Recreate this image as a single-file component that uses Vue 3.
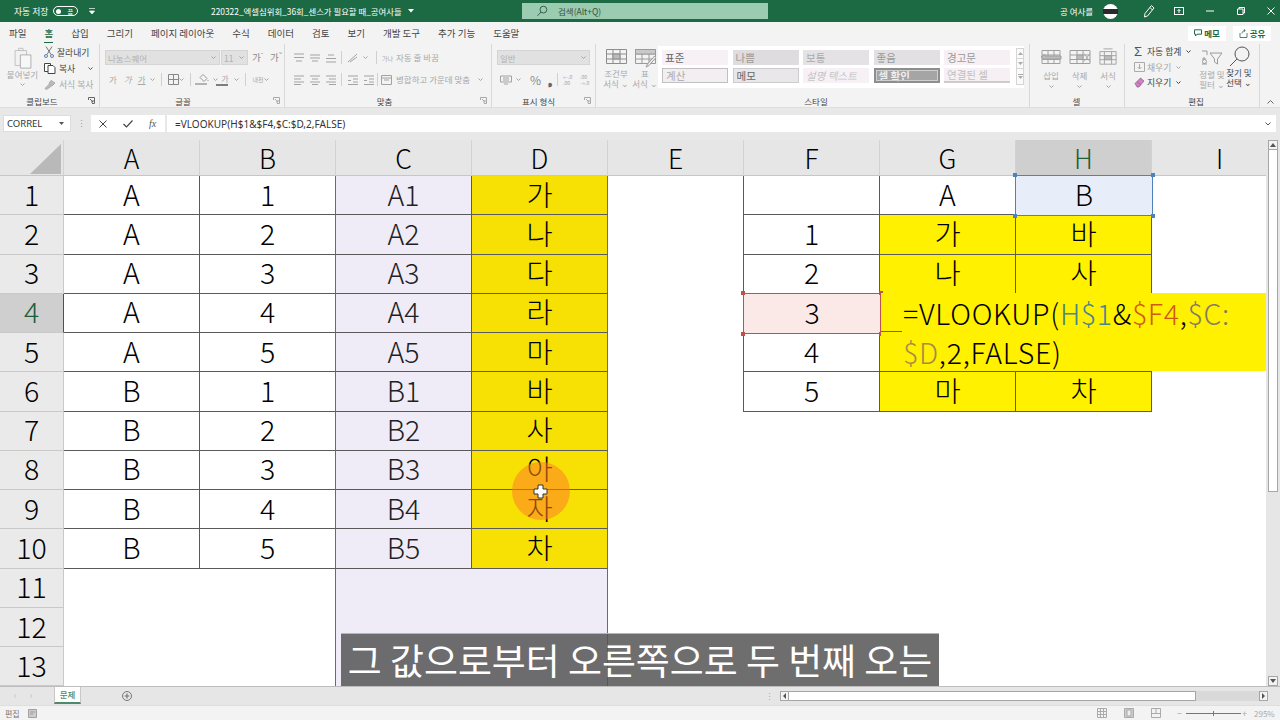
<script setup>
import { computed } from 'vue'

const tabs = ['파일', '홈', '삽입', '그리기', '페이지 레이아웃', '수식', '데이터', '검토', '보기', '개발 도구', '추가 기능', '도움말']
const columns = ['A', 'B', 'C', 'D', 'E', 'F', 'G', 'H', 'I']
const hangul = ['가', '나', '다', '라', '마', '바', '사', '아', '자', '차']
const styleCells = [
  ['표준', 'st-normal'], ['나쁨', 'st-bad'], ['보통', 'st-neutral'], ['좋음', 'st-good'], ['경고문', 'st-warn'],
  ['계산', 'st-calc'], ['메모', 'st-memo'], ['설명 텍스트', 'st-note'], ['셀 확인', 'st-check'], ['연결된 셀', 'st-link']
]

function value(col, r) {
  if (r <= 10) {
    const i = r - 1
    if (col === 'A') return r <= 5 ? 'A' : 'B'
    if (col === 'B') return String(((r - 1) % 5) + 1)
    if (col === 'C') return (r <= 5 ? 'A' : 'B') + (((r - 1) % 5) + 1)
    if (col === 'D') return hangul[i]
  }
  if (col === 'F' && r >= 2 && r <= 6) return String(r - 1)
  if (col === 'G') return { 1: 'A', 2: '가', 3: '나', 6: '마' }[r] || ''
  if (col === 'H') return { 1: 'B', 2: '바', 3: '사', 6: '차' }[r] || ''
  return ''
}

function classes(col, r) {
  const c = []
  if ('ABCD'.includes(col) && r <= 10) c.push('b-bottom')
  if ((col === 'A' || col === 'C') && r <= 10) c.push('b-right')
  if (col === 'B') c.push('b-purple')
  if (col === 'D') c.push('b-purple', r <= 10 ? 'f-gold' : 'f-lilac')
  if (col === 'C') c.push('f-lilac')
  if (col === 'E' && r <= 6) c.push('b-right')
  if ('FGH'.includes(col) && r <= 6) c.push('b-right', 'b-bottom')
  if ((col === 'G' || col === 'H') && r >= 2 && r <= 6) c.push('f-yellow')
  if (col === 'H' && r === 1) c.push('ref-blue')
  if (col === 'F' && r === 4) c.push('ref-red')
  return c
}

const rows = computed(() =>
  Array.from({ length: 13 }, (_, i) => ({
    n: i + 1,
    cells: columns.map((col) => ({ col, text: value(col, i + 1), cls: classes(col, i + 1) }))
  }))
)
</script>

<template>
  <div class="app">
    <header class="titlebar">
      <span class="autosave">자동 저장</span>
      <span class="toggle"><i></i><b>끔</b></span>
      <svg class="qa" width="8" height="8" viewBox="0 0 8 8"><path d="M1 1.5h6M1.5 4h5L4 7z" fill="#fff" stroke="#fff" stroke-width=".7" /></svg>
      <span class="doc">220322_엑셀심위회_36회_센스가 필요할 때_공여사들</span>
      <svg class="doc-caret" width="6" height="4" viewBox="0 0 6 4"><path d="M0 0h6L3 3.5z" fill="#fff" /></svg>
      <div class="search">
        <svg width="12" height="12" viewBox="0 0 12 12" fill="none" stroke="#35604a" stroke-width="1"><circle cx="7.4" cy="4.6" r="3.4" /><path d="M5 7 1.5 10.8" /></svg>
        <span>검색(Alt+Q)</span>
      </div>
      <span class="user">공 여사를</span>
      <span class="avatar"><i></i></span>
      <svg class="win w-pen" width="12" height="14" viewBox="0 0 12 14" fill="none" stroke="#fff"><path d="M8.5 1.5 11 4 4.5 12 1.5 13l.5-3.5zM7 3.5 9.5 6" /></svg>
      <svg class="win w-box" width="10" height="8" viewBox="0 0 10 8" fill="none" stroke="#fff"><rect x=".5" y=".5" width="9" height="7" /><path d="M5 6V2.5M3.5 4 5 2.5 6.5 4" /></svg>
      <svg class="win w-min" width="8" height="8" viewBox="0 0 8 8" stroke="#fff"><path d="M0 4h8" /></svg>
      <svg class="win w-max" width="8" height="8" viewBox="0 0 8 8" fill="none" stroke="#fff"><path d="M.5 2h5.500v5.500H.5zM2 2V.5h5.500V6H6" /></svg>
      <svg class="win w-close" width="8" height="8" viewBox="0 0 8 8" stroke="#fff"><path d="m.5.500 7 7M7.500.5l-7 7" /></svg>
    </header>

    <nav class="tabs">
      <span v-for="t in tabs" :key="t" class="tab" :class="{ active: t === '홈' }">{{ t }}</span>
      <span class="tabs-right">
        <span class="pill">
          <svg width="8" height="8" viewBox="0 0 8 8" fill="none" stroke="#1f6b45"><path d="M.5.800h7v4.400H3L1.500 7V5.200h-1z" /></svg>메모
        </span>
        <span class="pill pill-share">
          <svg width="9" height="9" viewBox="0 0 9 9" fill="none" stroke="#1f6b45" stroke-width=".8"><path d="M1 4v4.500h7V4M3 4.500c0-2 1.500-3 3-3M4.800.2 6.300 1.500 4.800 2.800" /></svg>공유
        </span>
      </span>
    </nav>

    <section class="ribbon">
      <!-- clipboard -->
      <div class="group g-clip">
        <div class="gbody clip-body">
          <div class="paste">
            <svg width="18" height="22" viewBox="0 0 20 25" fill="#f2f2f2" stroke="#bdbdbd"><path d="M1 4h13v17H1z" /><path d="M5 4V1.500h5V4z" /><path d="M7 9h12v15H7z" fill="#f7f7f7" stroke="#a8a8a8" /></svg>
            <span class="t dis">붙여넣기</span>
            <svg class="chev" width="5" height="3" viewBox="0 0 5 3"><path d="m.5.500 2 2 2-2" /></svg>
          </div>
          <div class="clip-list">
            <span class="clip-item dark">
              <svg width="10" height="12" viewBox="0 0 10 12" fill="none" stroke="#5b7fa8"><path d="m2 .5 5 8M8 .5l-5 8" stroke="#777" /><circle cx="2" cy="10" r="1.500" /><circle cx="8" cy="10" r="1.500" /></svg>잘라내기
            </span>
            <span class="clip-item dark">
              <svg width="12" height="11" viewBox="0 0 12 11" fill="#fff" stroke="#444"><path d="M.5.500h6v8h-6z" /><path d="M4 2.500h5l2 2v6H4z" /></svg>복사<svg class="chev copy-chev" width="5" height="3" viewBox="0 0 5 3"><path d="m.5.500 2 2 2-2" /></svg>
            </span>
            <span class="clip-item dis">
              <svg width="12" height="11" viewBox="0 0 12 11" fill="#bbb" stroke="#aaa"><path d="M7 1.500 11 4 8 7 5 4.500zM5.500 5 1 9.500l1.500 1L7.500 7" /></svg>서식 복사
            </span>
          </div>
        </div>
        <div class="glabel"><span>클립보드</span><svg class="launcher" width="7" height="7" viewBox="0 0 7 7" fill="none" stroke="#666"><path d="M.5 3V.5H6.500v6H4M2 2l3 3M5 3v2H3" /></svg></div>
      </div>

      <!-- font -->
      <div class="group g-font">
        <div class="gbody stack">
          <div class="line">
            <span class="field f-name">나눔스퀘어<svg class="chev" width="5" height="3" viewBox="0 0 5 3"><path d="m.5.500 2 2 2-2" /></svg></span>
            <span class="field f-size">11<svg class="chev" width="5" height="3" viewBox="0 0 5 3"><path d="m.5.500 2 2 2-2" /></svg></span>
            <span class="t mid grow-a">가<sup>ˆ</sup></span>
            <span class="t mid grow-b">가<sup>ˇ</sup></span>
          </div>
          <div class="line line2 font-tools">
            <b class="t dis">가</b><i class="t dis">가</i><u class="t dis">가</u>
            <svg class="chev" width="5" height="3" viewBox="0 0 5 3"><path d="m.5.500 2 2 2-2" /></svg>
            <span class="vsep"></span>
            <svg width="11" height="11" viewBox="0 0 11 11" fill="none" stroke="#888"><path d="M.5.500h10v10H.5zM5.500.5v10M.5 5.500h10" /></svg>
            <svg class="chev" width="5" height="3" viewBox="0 0 5 3"><path d="m.5.500 2 2 2-2" /></svg>
            <span class="vsep"></span>
            <span class="colorbtn"><svg width="11" height="8" viewBox="0 0 11 8" fill="none" stroke="#999"><path d="m5 .5 4 4-3 3-4-4zM10 6v1" /></svg><i class="bar b-fill"></i></span>
            <svg class="chev" width="5" height="3" viewBox="0 0 5 3"><path d="m.5.500 2 2 2-2" /></svg>
            <span class="colorbtn"><span class="t dis ca">가</span><i class="bar b-font"></i></span>
            <svg class="chev" width="5" height="3" viewBox="0 0 5 3"><path d="m.5.500 2 2 2-2" /></svg>
            <span class="vsep"></span>
            <span class="t dis tiny">내천</span>
            <svg class="chev" width="5" height="3" viewBox="0 0 5 3"><path d="m.5.500 2 2 2-2" /></svg>
          </div>
        </div>
        <div class="glabel"><span>글꼴</span><svg class="launcher" width="7" height="7" viewBox="0 0 7 7" fill="none" stroke="#aaa"><path d="M.5 3V.5H6.500v6H4M2 2l3 3M5 3v2H3" /></svg></div>
      </div>

      <!-- alignment -->
      <div class="group g-align">
        <div class="gbody stack">
          <div class="line align-line">
            <svg class="lines" width="12" height="10" viewBox="0 0 12 10"><path d="M1 1h10M1 4.500h10M3 8h6" /></svg>
            <svg class="lines" width="12" height="10" viewBox="0 0 12 10"><path d="M1 2h10M1 5h10M3 8h6" /></svg>
            <svg class="lines" width="12" height="10" viewBox="0 0 12 10"><path d="M3 2h6M1 5.500h10M1 9h10" /></svg>
            <span class="vsep s1"></span>
            <svg class="lines" width="12" height="10" viewBox="0 0 12 10"><path d="M1 9 10 1M3 9l7-5" /></svg>
            <svg class="chev" width="5" height="3" viewBox="0 0 5 3"><path d="m.5.500 2 2 2-2" /></svg>
            <span class="vsep s2"></span>
            <span class="t dis ws"><em class="tiny">가나</em>자동 줄 바꿈</span>
          </div>
          <div class="line line2 align-line">
            <svg class="lines" width="12" height="10" viewBox="0 0 12 10"><path d="M1 1h10M1 4h7M1 7h10M1 9.500h7" /></svg>
            <svg class="lines" width="12" height="10" viewBox="0 0 12 10"><path d="M1 1h10M3 4h6M1 7h10M3 9.500h6" /></svg>
            <svg class="lines" width="12" height="10" viewBox="0 0 12 10"><path d="M1 1h10M4 4h7M1 7h10M4 9.500h7" /></svg>
            <span class="vsep s1"></span>
            <svg class="lines" width="12" height="10" viewBox="0 0 12 10"><path d="M1 1h10M6 4h5M6 7h5M1 9.500h10M1 5.500h3" /></svg>
            <svg class="lines" width="12" height="10" viewBox="0 0 12 10"><path d="M1 1h10M6 4h5M6 7h5M1 9.500h10M4 5.500H1" /></svg>
            <span class="vsep s3"></span>
            <svg class="lines" width="11" height="10" viewBox="0 0 11 10"><path d="M.5.500h10v9H.5zM3 5h5M.5 3h10" /></svg>
            <span class="t dis ws">병합하고 가운데 맞춤</span>
            <svg class="chev merge-chev" width="5" height="3" viewBox="0 0 5 3"><path d="m.5.500 2 2 2-2" /></svg>
          </div>
        </div>
        <div class="glabel"><span>맞춤</span><svg class="launcher" width="7" height="7" viewBox="0 0 7 7" fill="none" stroke="#aaa"><path d="M.5 3V.5H6.500v6H4M2 2l3 3M5 3v2H3" /></svg></div>
      </div>

      <!-- number -->
      <div class="group g-num">
        <div class="gbody stack">
          <div class="line"><span class="field f-fmt">일반<svg class="chev" width="5" height="3" viewBox="0 0 5 3"><path d="m.5.500 2 2 2-2" /></svg></span></div>
          <div class="line line2 num-tools">
            <svg class="lines" width="12" height="10" viewBox="0 0 12 10"><path d="M.5 1h11v6H.5zM3 3h6M3 5h6M4 9h4" /></svg>
            <svg class="chev" width="5" height="3" viewBox="0 0 5 3"><path d="m.5.500 2 2 2-2" /></svg>
            <span class="percent">%</span>
            <span class="comma">❟</span>
            <span class="vsep"></span>
            <span class="dec">←.0<br />.00</span>
            <span class="dec">.00<br />→.0</span>
          </div>
        </div>
        <div class="glabel"><span>표시 형식</span><svg class="launcher" width="7" height="7" viewBox="0 0 7 7" fill="none" stroke="#aaa"><path d="M.5 3V.5H6.500v6H4M2 2l3 3M5 3v2H3" /></svg></div>
      </div>

      <!-- styles -->
      <div class="group g-style">
        <div class="gbody style-body">
          <div class="bigbtn b-cond">
            <svg width="21" height="15" viewBox="0 0 21 15" fill="none" stroke="#8d8d8d"><path d="M.5.500h20v14H.5zM.5 5h20M.5 10h20M7 .5v14M14 .5v14" /><path d="M7 5h7v5H7z" fill="#bbb" /></svg>
            <span class="t dis two">조건부<br />서식 ⌄</span>
          </div>
          <div class="bigbtn b-table">
            <svg width="21" height="19" viewBox="0 0 21 19" fill="none" stroke="#9a9a9a"><path d="M.5.500h20v14H.5zM.5 5h20M.5 10h20M7 .5v14M14 .5v14" /><path d="M.5.500h20V5H.5z" fill="#c9c9c9" /><path d="m19.500 7-7 8-1.500 3 3-1.500 7-8z" fill="#eee" /></svg>
            <span class="t dis two">표<br />서식 ⌄</span>
          </div>
          <div class="gallery">
            <div class="gal-grid">
              <span v-for="[label, cls] in styleCells" :key="label" class="gal-cell" :class="cls">{{ label }}</span>
            </div>
            <div class="gal-scroll">
              <span class="gs"><svg width="5" height="3" viewBox="0 0 5 3"><path d="M0 3 2.500 0 5 3z" fill="#aaa" /></svg></span>
              <span class="gs"><svg width="5" height="3" viewBox="0 0 5 3"><path d="M0 0 2.500 3 5 0z" fill="#aaa" /></svg></span>
              <span class="gs gs-last"><svg width="5" height="5" viewBox="0 0 5 5"><path d="M0 0h5v1H0zM0 2h5L2.500 5z" fill="#aaa" /></svg></span>
            </div>
          </div>
        </div>
        <div class="glabel center"><span>스타일</span></div>
      </div>

      <!-- cells -->
      <div class="group g-cells">
        <div class="gbody cell-body">
          <div class="cellbtn">
            <svg width="22" height="17" viewBox="0 0 22 17" fill="none" stroke="#9f9f9f"><path d="M2 2h18v13H2zM2 6.500h18M2 11h18M8 2v13M14 2v13" /><path d="M1 8.500 5 6v1.500h16v3H5V11z" fill="#bbb" /></svg>
            <span class="t dis">삽입</span>
            <svg class="chev" width="5" height="3" viewBox="0 0 5 3"><path d="m.5.500 2 2 2-2" /></svg>
          </div>
          <div class="cellbtn">
            <svg width="22" height="17" viewBox="0 0 22 17" fill="none" stroke="#9f9f9f"><path d="M1 2h20v13H1zM1 6.500h20M1 11h20M8 2v13M14 2v13" /><path d="M8 6.500h6V11H8z" fill="#bbb" /><path d="m15 5 6 8M21 5l-6 8" stroke="#aaa" /></svg>
            <span class="t dis">삭제</span>
            <svg class="chev" width="5" height="3" viewBox="0 0 5 3"><path d="m.5.500 2 2 2-2" /></svg>
          </div>
          <div class="cellbtn">
            <svg width="20" height="20" viewBox="0 0 20 20" fill="none" stroke="#9f9f9f"><path d="M5 1h10M1 4h18v14H1zM1 8.500h18M1 13h18M6 4v14M14 4v14" /><path d="M6 8.500h8V13H6z" fill="#bbb" /></svg>
            <span class="t dis">서식</span>
            <svg class="chev" width="5" height="3" viewBox="0 0 5 3"><path d="m.5.500 2 2 2-2" /></svg>
          </div>
        </div>
        <div class="glabel center"><span>셀</span></div>
      </div>

      <!-- editing -->
      <div class="group g-edit">
        <div class="gbody edit-body">
          <div class="edit-list">
            <span class="edit-item dark"><span class="sigma">Σ</span>자동 합계<svg class="chev c-dark" width="5" height="3" viewBox="0 0 5 3"><path d="m.5.500 2 2 2-2" /></svg></span>
            <span class="edit-item dis">
              <svg width="11" height="10" viewBox="0 0 11 10" fill="none" stroke="#aaa"><path d="M.5.500h10v9H.5zM5.500 2v5M3.500 5l2 2 2-2" /></svg>채우기<svg class="chev" width="5" height="3" viewBox="0 0 5 3"><path d="m.5.500 2 2 2-2" /></svg>
            </span>
            <span class="edit-item dark">
              <svg width="11" height="11" viewBox="0 0 11 11" fill="#cf7fc2" stroke="#8a5a8a" stroke-width=".7"><path d="M1 6.500 6.500 1 10 4 5 10H3z" /><path d="M3 4.500 7 8" fill="none" /></svg>지우기<svg class="chev c-dark" width="5" height="3" viewBox="0 0 5 3"><path d="m.5.500 2 2 2-2" /></svg>
            </span>
          </div>
          <div class="bigbtn b-sort">
            <svg width="22" height="17" viewBox="0 0 22 17" fill="none" stroke="#9a9a9a"><path d="M1 2h5v4M1 10h4M1 15h5M3 8v2M9 4h12l-4.500 6v5l-3-2v-3z" /><circle cx="3.500" cy="12.500" r="2" /></svg>
            <span class="t dis two">정렬 및<br />필터 ⌄</span>
          </div>
          <div class="bigbtn b-find">
            <svg width="21" height="21" viewBox="0 0 21 21" fill="none" stroke="#555"><circle cx="13" cy="8" r="7" /><path d="M8 13 1 20" /></svg>
            <span class="t dark two">찾기 및<br />선택 ⌄</span>
          </div>
        </div>
        <div class="glabel center"><span>편집</span></div>
      </div>
      <svg class="collapse" width="7" height="4" viewBox="0 0 7 4" fill="none" stroke="#666"><path d="m.5 3.500 3-3 3 3" /></svg>
    </section>

    <section class="formulabar">
      <span class="namebox">CORREL<svg width="5" height="3" viewBox="0 0 5 3"><path d="M0 0h5L2.500 3z" fill="#555" /></svg></span>
      <span class="fdots">⋮</span>
      <span class="fbtns">
        <svg width="8" height="8" viewBox="0 0 8 8" stroke="#444"><path d="m.5.500 7 7M7.500.5l-7 7" /></svg>
        <svg width="10" height="8" viewBox="0 0 10 8" fill="none" stroke="#444" stroke-width="1.200"><path d="m.5 4 3 3L9.500.5" /></svg>
        <i class="fx">fx</i>
      </span>
      <span class="finput">=VLOOKUP(H$1&amp;$F4,$C:$D,2,FALSE)<svg width="6" height="4" viewBox="0 0 6 4" fill="none" stroke="#555"><path d="m.5.500 2.500 2.500L5.500.5" /></svg></span>
    </section>

    <section class="sheetrow">
      <div class="sheet">
        <div class="corner"><svg width="33" height="32" viewBox="0 0 33 32"><path d="M32 1v30H1z" fill="#b9b9b9" /></svg></div>
        <div v-for="c in columns" :key="c" class="colhead" :class="{ 'head-sel': c === 'H' }">{{ c }}</div>
        <template v-for="row in rows" :key="row.n">
          <div class="rowhead" :class="{ 'head-sel': row.n === 4, 'rowhead-sel': row.n === 4 }">{{ row.n }}</div>
          <div v-for="cell in row.cells" :key="cell.col" class="cell" :class="cell.cls">
            {{ cell.text }}
            <template v-if="cell.cls.includes('ref-blue') || cell.cls.includes('ref-red')">
              <i class="knob k1"></i><i class="knob k2"></i><i class="knob k3"></i><i class="knob k4"></i>
            </template>
          </div>
        </template>

        <div class="editor">=VLOOKUP(<span class="r-blue">H$1</span>&amp;<span class="r-red">$F4</span>,<span class="r-grey">$C:</span><br /><span class="r-tan">$D</span>,2,FALSE)</div>
        <div class="spot"></div>
        <svg class="cursor" width="15" height="15" viewBox="0 0 15 15"><path d="M5 1h5v4h4v5h-4v4H5v-4H1V5h4z" fill="#fff" stroke="#333" stroke-width="1" /></svg>
        <div class="subtitle">그 값으로부터 오른쪽으로 두 번째 오는</div>
      </div>
      <aside class="vscroll">
        <span class="vbtn"><svg width="6" height="4" viewBox="0 0 6 4"><path d="M0 4 3 0l3 4z" fill="#555" /></svg></span>
        <span class="vthumb"></span>
        <span class="vtrack"></span>
        <span class="vbtn"><svg width="6" height="4" viewBox="0 0 6 4"><path d="M0 0l3 4 3-4z" fill="#555" /></svg></span>
      </aside>
    </section>

    <section class="sheettabs">
      <span class="nav-arrow">‹</span><span class="nav-arrow">›</span>
      <span class="sheet-tab">문제</span>
      <svg class="plus" width="10" height="10" viewBox="0 0 10 10" fill="none" stroke="#777"><circle cx="5" cy="5" r="4.500" /><path d="M5 2.500v5M2.500 5h5" stroke-width="1.200" /></svg>
      <span class="split">⋮</span>
      <div class="hscroll">
        <span class="hbtn"><svg width="3" height="6" viewBox="0 0 3 6"><path d="M3 0 0 3l3 3z" fill="#555" /></svg></span>
        <span class="hthumb"></span>
        <span class="htrack"></span>
        <span class="hbtn"><svg width="3" height="6" viewBox="0 0 3 6"><path d="m0 0 3 3-3 3z" fill="#555" /></svg></span>
      </div>
    </section>

    <footer class="status">
      <span class="st-text">편집</span>
      <svg width="9" height="9" viewBox="0 0 9 9" fill="#ccc" stroke="#888" stroke-width=".7"><path d="M.5.500h8v8h-8zM2 3h5M2 5h3" /></svg>
      <span class="st-right">
        <svg class="view" width="10" height="10" viewBox="0 0 10 10" fill="none" stroke="#aaa"><path d="M.5.500h9v9h-9zM.5 3.500h9M.5 6.500h9M3.500.5v9M6.500.5v9" /></svg>
        <svg class="view" width="10" height="10" viewBox="0 0 10 10" fill="#ccc" stroke="#aaa"><path d="M.5.500h9v9h-9z" /><path d="M3 2h4v6H3z" fill="#eee" /></svg>
        <svg class="view" width="10" height="10" viewBox="0 0 10 10" fill="none" stroke="#aaa"><path d="M.5.500h9v9h-9zM5 .5v5H.5M5 5.500h4.500" /></svg>
        <span class="zm">−</span>
        <span class="slider"><i></i></span>
        <span class="zm">+</span>
        <span class="zoomv">295%</span>
      </span>
    </footer>
  </div>
</template>

<style>
html, body { margin: 0; padding: 0; background: #fff; }
</style>

<style scoped>
.app {
  width: 1280px; height: 720px; overflow: hidden; display: flex; flex-direction: column;
  font-family: "Noto Sans CJK KR", "Noto Sans", sans-serif; color: #444; background: #f3f3f3;
}
/* title bar */
.titlebar { height: 22px; flex: none; background: #1c6a44; color: #fff; display: flex; align-items: center; font-size: 8.5px; white-space: nowrap; }
.autosave { margin-left: 14px; width: 39px; font-size: 8.800px; }
.toggle { width: 25px; height: 10px; border: 1px solid #fff; border-radius: 6px; box-sizing: border-box; display: flex; align-items: center; justify-content: space-between; padding: 0 4px 0 2px; }
.toggle i { width: 5px; height: 5px; background: #fff; border-radius: 50%; }
.toggle b { font-weight: 400; font-size: 6px; }
.qa { margin-left: 10px; }
.doc { margin-left: 115px; width: 192px; font-size: 8.400px; }
.doc-caret { margin-left: 5px; }
.search { margin-left: 108px; width: 246px; height: 16px; background: #9bcbb0; color: #33533f; display: flex; align-items: center; font-size: 8.500px; box-sizing: border-box; padding-left: 14px; gap: 10px; }
.user { margin-left: 292px; width: 43px; font-size: 8.500px; }
.avatar { width: 15px; height: 15px; background: #fff; border-radius: 50%; display: flex; align-items: center; }
.avatar i { display: block; width: 15px; height: 5px; background: #2a2a2a; }
.w-pen { margin-left: 25px; }
.w-box { margin-left: 19px; }
.w-min { margin-left: 22px; }
.w-max { margin-left: 23px; }
.w-close { margin-left: 22px; }

/* tabs */
.tabs { height: 22px; flex: none; display: flex; align-items: center; gap: 18px; padding-left: 9px; font-size: 9.500px; color: #444; background: #f3f3f3; white-space: nowrap; }
.tab { position: relative; line-height: 14px; }
.tab.active { color: #1c6a44; font-weight: 500; }
.tab.active::after { content: ""; position: absolute; left: 0; right: 0; bottom: -3px; height: 1.500px; background: #1c6a44; }
.tabs-right { margin-left: auto; display: flex; gap: 7px; padding-right: 9px; }
.pill { width: 38px; height: 15px; background: #fff; color: #1c6a44; font-weight: 700; display: flex; align-items: center; justify-content: center; gap: 2px; font-size: 8.500px; }

/* ribbon */
.ribbon { height: 63px; flex: none; display: flex; background: #f3f3f3; align-items: stretch; }
.group { box-sizing: border-box; display: flex; flex-direction: column; border-right: 1px solid #d8d8d8; }
.g-clip { width: 100px; }
.g-font { width: 185px; padding-left: 5px; }
.g-align { width: 207px; padding-left: 8px; }
.g-num { width: 104px; padding-left: 5px; }
.g-style { width: 434px; padding-left: 8px; }
.g-cells { width: 95px; border-right: 1px solid #d8d8d8; }
.g-edit { width: 135px; padding-left: 9px; }
.gbody { flex: 1; min-height: 0; }
.glabel { height: 13px; flex: none; display: flex; align-items: center; font-size: 8.500px; line-height: 12px; color: #444; padding-right: 1px; }
.glabel span { flex: 1; text-align: center; }
.launcher { flex: none; width: 7px; margin: 0 3px 0 4px; }
.g-font .glabel span { padding-right: 8px; }
.t { font-size: 8.500px; line-height: 11px; white-space: nowrap; }
.dis { color: #a8a8a8; }
.mid { color: #8a8a8a; }
.dark { color: #444; }
.ws { white-space: nowrap; }
.tiny { font-size: 6px; font-style: normal; }
.chev { fill: none; stroke: #a5a5a5; flex: none; }
.c-dark { stroke: #444; }

.clip-body { display: flex; }
.paste { width: 44px; display: flex; flex-direction: column; align-items: center; padding-top: 3px; padding-left: 1px; box-sizing: border-box; }
.paste .t { margin-top: 0; }
.paste .chev { margin-top: 3px; }
.clip-list { display: flex; flex-direction: column; }
.clip-item { height: 16px; display: flex; align-items: center; gap: 3px; font-size: 8.800px; white-space: nowrap; }
.copy-chev { margin-left: 10px; stroke: #555; }

.stack { display: flex; flex-direction: column; padding-top: 6px; box-sizing: border-box; }
.line { height: 15px; display: flex; align-items: center; }
.line2 { margin-top: 7px; }
.field { height: 15px; box-sizing: border-box; background: #e2e1e1; border: 1px solid #d4d4d4; color: #b0b0b0; font-size: 8.500px; display: flex; align-items: center; justify-content: space-between; padding: 0 3px 0 2px; }
.f-name { width: 115px; margin-right: 1px; }
.f-size { width: 27px; }
.grow-a { margin-left: 4px; width: 17px; font-size: 9.500px; }
.grow-b { margin-left: 1px; font-size: 9.500px; }
sup { font-size: 6px; line-height: 0; }
.font-tools { gap: 0; padding-left: 4px; }
.font-tools b { font-weight: 400; margin-right: 7px; }
.font-tools i { margin-right: 6px; }
.font-tools u { margin-right: 5px; }
.vsep { width: 1px; height: 13px; background: #d0d0d0; margin: 0 6px; flex: none; }
.colorbtn { display: flex; flex-direction: column; align-items: center; width: 13px; margin-right: 3px; }
.bar { display: block; width: 12px; height: 2px; margin-top: 1px; }
.b-fill { background: #b3b3b3; }
.b-font { background: #7d7d7d; }
.ca { line-height: 9px; font-size: 8px; }

.align-line .lines { margin-right: 4px; flex: none; }
.lines { fill: none; stroke: #a3a3a3; stroke-width: 1; }
.s1 { margin: 0 5px 0 0; }
.s2 { margin: 0 5px 0 8px; }
.s3 { margin: 0 3px 0 -2px; }
.align-line .t em { margin-right: 3px; }
.merge-chev { margin-left: 8px; }

.f-fmt { width: 93px; }
.num-tools { padding-left: 3px; gap: 4px; }
.percent { font-size: 12px; color: #8c8c8c; margin-left: 5px; }
.comma { font-size: 11px; color: #666; font-weight: 700; margin-left: 3px; }
.num-tools .vsep { margin: 0 1px; }
.dec { font-size: 5px; line-height: 6px; color: #a5a5a5; width: 13px; }

.style-body { display: flex; }
.bigbtn { display: flex; flex-direction: column; align-items: center; }
.b-cond { width: 24px; padding-top: 5px; margin-right: 5px; }
.b-table { width: 24px; padding-top: 5px; }
.two { line-height: 10px; text-align: center; margin-top: 4px; }
.b-table .two { margin-top: 0; }
.gallery { width: 366px; height: 42px; margin-left: 1px; margin-top: 2px; background: #fff; display: flex; box-sizing: border-box; padding: 4px 0 0 4px; }
.gal-grid { display: grid; grid-template-columns: repeat(5, 66px); grid-auto-rows: 15px; column-gap: 4.500px; row-gap: 3px; width: 350px; font-size: 10.500px; color: #777; }
.gal-cell { padding-left: 3px; display: flex; align-items: center; box-sizing: border-box; white-space: nowrap; line-height: 12px; }
.st-normal { background: #f7f1f5; color: #666; }
.st-bad { background: #dedcde; color: #999; }
.st-neutral { background: #e4e2e4; color: #aaa; }
.st-good { background: #e2e0e2; color: #999; }
.st-warn { background: #f6f0f4; color: #999; }
.st-calc { background: #f2eef1; border: 1px solid #c0c0c0; color: #aaa; }
.st-memo { background: #e9e7e9; border: 1px solid #cccccc; color: #666; }
.st-note { background: #f7f1f5; color: #c4c4c4; font-style: italic; }
.st-check { background: #a5a5a5; border: 2px solid #8e8e8e; outline: 1px solid #cfcfcf; outline-offset: -3px; color: #eee; font-weight: 700; }
.st-link { background: #f6f0f4; color: #c0c0c0; border-bottom: 2px solid #ccc; }
.gal-scroll { margin-left: 5px; width: 8px; display: flex; flex-direction: column; margin-top: -2px; }
.gs { height: 11px; flex: none; box-sizing: border-box; border: 1px solid #d5d5d5; display: flex; align-items: center; justify-content: center; background: #fafafa; margin-bottom: -1px; }
.gs-last { height: 17px; }

.cell-body { display: flex; padding-left: 9px; gap: 4.500px; }
.cellbtn { width: 24px; display: flex; flex-direction: column; align-items: center; }
.cellbtn svg:first-child { margin-top: 4px; height: 18px; }
.cellbtn .t { margin-top: 4px; }
.cellbtn .chev { margin-top: 4px; }

.edit-body { display: flex; }
.edit-list { width: 65px; display: flex; flex-direction: column; }
.edit-item { height: 15.500px; display: flex; align-items: center; gap: 2px; font-size: 8.800px; white-space: nowrap; }
.edit-item .chev { margin-left: 3px; }
.sigma { font-size: 13px; width: 11px; line-height: 12px; color: #555; font-family: "Liberation Sans", sans-serif; }
.b-sort { width: 24px; padding-top: 5px; margin-left: 1px; }
.b-find { width: 32px; margin-left: -1px; padding-top: 2px; }
.b-sort .two { margin-top: 3px; }
.b-find .two { margin-top: 0; }
.collapse { margin: 56px 0 0 7px; }

/* formula bar */
.formulabar { height: 33px; flex: none; box-sizing: border-box; background: #e8e8e8; border-top: 1px solid #dedede; display: flex; padding: 7px 0 0 3px; align-items: flex-start; font-family: "Noto Sans", sans-serif; }
.namebox { width: 68px; height: 17px; box-sizing: border-box; background: #fff; border: 1px solid #ddd; display: flex; align-items: center; justify-content: space-between; padding: 0 6px 0 3px; font-size: 9.500px; color: #333; }
.fdots { width: 20px; text-align: center; color: #999; font-size: 9px; line-height: 17px; }
.fbtns { width: 74px; height: 17px; box-sizing: border-box; background: #fff; display: flex; align-items: center; gap: 16px; padding-left: 8px; }
.fx { font-family: "Liberation Serif", serif; font-size: 10px; color: #555; }
.finput { margin-left: 2px; width: 1109px; height: 17px; box-sizing: border-box; background: #fff; display: flex; align-items: center; justify-content: space-between; padding: 0 5px 0 8px; font-size: 10.050px; color: #333; }

/* sheet */
.sheetrow { height: 546px; flex: none; display: flex; }
.sheet { position: relative; width: 1266px; height: 546px; overflow: hidden; background: #fff; display: grid; grid-template-columns: 64px repeat(9, 136px); grid-template-rows: 36px repeat(13, 39.270px); font-size: 28.500px; font-weight: 300; line-height: 1; color: #000; }
.corner { background: #e6e6e6; border-right: 1px solid #d2d2d2; border-bottom: 1px solid #c6c6c6; box-sizing: border-box; display: flex; justify-content: flex-end; align-items: flex-end; padding: 0 1px 0 0; }
.colhead { background: #e6e6e6; border-right: 1px solid #d2d2d2; border-bottom: 1px solid #c6c6c6; box-sizing: border-box; display: flex; align-items: center; justify-content: center; font-size: 26.500px; color: #000; padding-top: 1px; }
.rowhead { background: #eaeaea; border-right: 1px solid #c9c9c9; border-bottom: 1px solid #c9c9c9; box-sizing: border-box; display: flex; align-items: center; justify-content: center; color: #000; padding-bottom: 2.500px; }
.head-sel { background: #cfcfcf; color: #1c5f38; }
.rowhead-sel { border-right: 1px solid #1f6b45; }
.cell { box-sizing: border-box; display: flex; align-items: center; justify-content: center; position: relative; color: #000; min-width: 0; padding-bottom: 2.500px; }
.b-right { border-right: 1px solid #5a5a5a; }
.b-bottom { border-bottom: 1px solid #5a5a5a; }
.b-purple { border-right: 1px solid #6a5fa8; }
.f-lilac { background: #efecf8; color: #1f1f26; }
.f-gold { background: #f7e105; color: #000; }
.f-yellow { background: #fff100; }
.ref-blue { background: #e8eef9; outline: 1px solid #4f81bd; border: 0; z-index: 1; }
.ref-red { background: #fbe9e8; outline: 1px solid #c0504d; border: 0; z-index: 1; }
.knob { position: absolute; width: 4px; height: 4px; background: #4f81bd; }
.ref-red .knob { background: #c0504d; }
.k1 { left: -3px; top: -3px; }
.k2 { right: -3px; top: -3px; }
.k3 { left: -3px; bottom: -3px; }
.k4 { right: -3px; bottom: -3px; }
.editor { position: absolute; left: 881px; top: 153px; width: 385px; height: 78px; box-sizing: border-box; background: #fff100; padding: 0 0 0 22px; line-height: 39px; font-size: 28.500px; letter-spacing: .72px; color: #000; white-space: nowrap; z-index: 2; }
.editor::before { content: ""; position: absolute; left: 0; top: 38px; width: 21px; height: 1px; background: #666; }
.r-blue { color: #4a8590; }
.r-red { color: #cf5a18; }
.r-grey { color: #857a66; }
.r-tan { color: #a98b44; }
.spot { position: absolute; left: 512px; top: 322px; width: 58px; height: 58px; border-radius: 50%; background: rgba(255, 128, 40, 0.55); z-index: 3; }
.cursor { position: absolute; left: 533px; top: 344px; z-index: 4; }
.subtitle { position: absolute; left: 341px; top: 493px; width: 598px; height: 53px; box-sizing: border-box; background: rgba(85, 85, 85, 0.85); border-top: 1px solid #b5b5b8; color: #fff; font-size: 36.900px; font-weight: 400; padding-bottom: 2px; display: flex; align-items: center; justify-content: center; white-space: nowrap; z-index: 5; }

/* vertical scrollbar */
.vscroll { width: 14px; flex: none; background: #e6e6e6; display: flex; flex-direction: column; align-items: center; }
.vbtn { width: 10px; height: 10px; box-sizing: border-box; border: 1px solid #a6a6a6; background: #f3f3f3; display: flex; align-items: center; justify-content: center; flex: none; }
.vthumb { width: 10px; height: 342px; box-sizing: border-box; background: #fff; border: 1px solid #a6a6a6; border-top: 0; flex: none; }
.vtrack { flex: 1; width: 10px; }

/* sheet tabs */
.sheettabs { height: 19px; flex: none; box-sizing: border-box; background: #e6e6e6; border-top: 1px solid #bdbdbd; display: flex; align-items: center; position: relative; }
.nav-arrow { width: 16px; text-align: center; color: #bbb; font-size: 9px; line-height: 14px; }
.nav-arrow:first-child { margin-left: 7px; }
.sheet-tab { margin-left: 15px; width: 27px; height: 17px; box-sizing: border-box; background: #fff; color: #4f8a6a; font-weight: 500; font-size: 8.500px; text-align: center; line-height: 14px; border-bottom: 2px solid #4f8a6a; align-self: flex-start; border-left: 1px solid #c8c8c8; border-right: 1px solid #c8c8c8; }
.plus { margin-left: 41px; }
.split { margin-left: 633px; width: 9px; color: #aaa; font-size: 9px; }
.hscroll { margin-left: 6px; width: 488px; height: 10px; display: flex; background: #d9d9d9; align-items: stretch; }
.hbtn { width: 9px; box-sizing: border-box; border: 1px solid #a6a6a6; background: #f3f3f3; display: flex; align-items: center; justify-content: center; flex: none; }
.hthumb { width: 407px; box-sizing: border-box; background: #fff; border: 1px solid #a6a6a6; border-left: 0; flex: none; }
.htrack { flex: 1; }

/* status */
.status { height: 15px; flex: none; box-sizing: border-box; background: #f3f3f3; border-top: 1px solid #dedede; display: flex; align-items: center; font-size: 8px; color: #777; padding-left: 5px; }
.st-text { width: 23px; }
.st-right { margin-left: auto; display: flex; align-items: center; color: #aaa; }
.view { margin-right: 17px; }
.zm { width: 7px; font-size: 9px; margin-left: -1px; }
.slider { width: 55px; height: 1px; background: #777; position: relative; margin: 0 2px; }
.slider i { position: absolute; left: 27px; top: -2px; width: 1px; height: 5px; background: #777; }
.zoomv { margin-left: 5px; margin-right: 2px; width: 24px; font-size: 8px; }
</style>
